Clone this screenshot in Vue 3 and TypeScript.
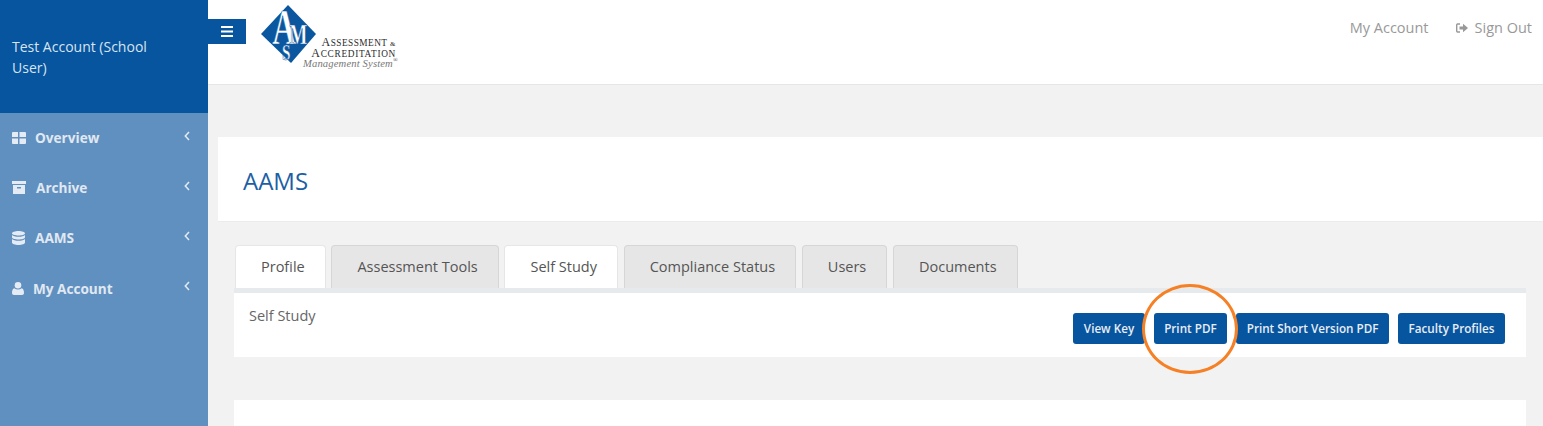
<script setup lang="ts">
const menu = [
  { label: 'Overview', icon: 'grid', gap: 'g1' },
  { label: 'Archive', icon: 'archive', gap: 'g2' },
  { label: 'AAMS', icon: 'db', gap: 'g3' },
  { label: 'My Account', icon: 'user', gap: 'g4' },
]
const tabs = [
  { label: 'Profile', on: true },
  { label: 'Assessment Tools', on: false },
  { label: 'Self Study', on: true },
  { label: 'Compliance Status', on: false },
  { label: 'Users', on: false },
  { label: 'Documents', on: false },
]
</script>

<template>
  <div class="page">
    <aside class="side">
      <div class="who">Test Account (School User)</div>
      <nav class="menu">
        <a v-for="m in menu" :key="m.label" class="item">
          <svg v-if="m.icon === 'grid'" class="ic" width="14" height="12" viewBox="0 0 14 12"><path fill="#e4ebf4" d="M0 1a1 1 0 0 1 1-1h5v5H0zM7.500 0H13a1 1 0 0 1 1 1v4H7.500zM0 6.500h6V12H1a1 1 0 0 1-1-1zM7.500 6.500H14V11a1 1 0 0 1-1 1H7.500z"/></svg>
          <svg v-else-if="m.icon === 'archive'" class="ic" width="14" height="13" viewBox="0 0 14 13"><path fill="#e4ebf4" fill-rule="evenodd" d="M0 0h14v3H0zM1 4h12v9H1zM5 6v1.500h4V6z"/></svg>
          <svg v-else-if="m.icon === 'db'" class="ic" width="13" height="14" viewBox="0 0 13 14"><path fill="#e4ebf4" d="M6.500 0C10 0 13 1 13 2.300S10 4.600 6.500 4.600 0 3.600 0 2.300 3 0 6.500 0zM0 4c1 1.200 3.500 1.800 6.500 1.800S12 5.200 13 4v2.300c0 1.300-3 2.300-6.500 2.300S0 7.600 0 6.300zM0 8c1 1.200 3.500 1.800 6.500 1.800S12 9.200 13 8v3.500c0 1.400-3 2.500-6.500 2.500S0 12.900 0 11.500z"/></svg>
          <svg v-else class="ic" width="12" height="13" viewBox="0 0 12 13"><circle cx="6" cy="3.300" r="3.300" fill="#e4ebf4"/><path fill="#e4ebf4" d="M2.300 6.200C3.300 7 4.600 7.400 6 7.400s2.700-.4 3.700-1.200C11.200 6.600 12 8.300 12 11c0 1.300-.8 2-2 2H2c-1.200 0-2-.7-2-2 0-2.700.8-4.400 2.300-4.800z"/></svg>
          <span class="lbl" :class="m.gap">{{ m.label }}</span>
          <svg class="chev" width="6" height="10" viewBox="0 0 6 10"><path d="M5 1 1.300 5 5 9" fill="none" stroke="#e4ebf4" stroke-width="1.500"/></svg>
        </a>
      </nav>
    </aside>

    <div class="main">
      <header class="top">
        <button class="toggle" aria-label="menu">
          <svg width="12" height="11" viewBox="0 0 12 11"><path fill="#fff" d="M0 0h12v2H0zM0 4.500h12v2H0zM0 9h12v2H0z"/></svg>
        </button>
        <div class="logo">
          <svg class="mark" width="57" height="60" viewBox="0 0 57 60">
            <path fill="#0a569f" d="M27 1 55 30 30 59 0 30z"/>
            <text class="mono" fill="#fff" stroke="#0a569f" stroke-width=".5" transform="scale(.66 1)"><tspan x="17" y="40" font-size="50">A</tspan><tspan x="43" y="40" font-size="29">M</tspan><tspan x="32" y="56" font-size="23">S</tspan></text>
          </svg>
          <div class="brand">
            <div class="b1"><span class="cap">A</span>SSESSMENT <span class="amp">&amp;</span></div>
            <div class="b2"><span class="cap">A</span>CCREDITATION</div>
            <div class="b3">Management System<sup>®</sup></div>
          </div>
        </div>
        <div class="links">
          <a class="lnk">My Account</a>
          <a class="lnk out">
            <svg width="12" height="10" viewBox="0 0 12 10"><path fill="none" stroke="#999" stroke-width="1.400" d="M4 1H1.500a1 1 0 0 0-.8.8v6.400a1 1 0 0 0 .8.8H4"/><path fill="#999" d="M3.500 3.500H7V.8L12 5 7 9.200V6.500H3.500z"/></svg>
            Sign Out
          </a>
        </div>
      </header>

      <section class="title"><h1>AAMS</h1></section>

      <div class="body">
        <div class="tabs">
          <a v-for="t in tabs" :key="t.label" class="tab" :class="{ on: t.on }">{{ t.label }}</a>
        </div>
        <div class="panel">
          <span class="ptext">Self Study</span>
          <div class="btns">
            <a class="btn">View Key</a>
            <span class="mark-wrap">
              <a class="btn">Print PDF</a>
              <span class="ring"></span>
            </span>
            <a class="btn">Print Short Version PDF</a>
            <a class="btn">Faculty Profiles</a>
          </div>
        </div>
        <div class="next"></div>
      </div>
    </div>
  </div>
</template>

<style>
html, body { margin: 0; height: 100%; overflow: hidden; background: #f2f2f2; }
</style>

<style scoped>
.page {
  display: flex;
  height: 426px;
  overflow: hidden;
  font-family: "Open Sans", sans-serif;
  background: #f2f2f2;
}
.side {
  width: 208px;
  flex: none;
  background: #6090c0;
}
.who {
  box-sizing: border-box;
  height: 113px;
  padding: 36px 40px 0 12px;
  background: #07549f;
  color: #d8e4f0;
  font-size: 14px;
  line-height: 21px;
}
.menu { display: flex; flex-direction: column; }
.item {
  display: flex;
  align-items: center;
  box-sizing: border-box;
  height: 50.200px;
  padding: 0 18px 1px 12px;
  color: #e0e8f2;
  font-size: 13.600px;
  font-weight: 700;
}
.ic { flex: none; }
.lbl { flex: 1; }
.g1 { margin-left: 9px; }
.g2 { margin-left: 10px; }
.g3 { margin-left: 10px; }
.g4 { margin-left: 9px; }
.chev { margin-top: -4px; }
.main { flex: 1; min-width: 0; display: flex; flex-direction: column; }
.top {
  box-sizing: border-box;
  height: 85px;
  flex: none;
  display: flex;
  align-items: flex-start;
  background: #fff;
  border-bottom: 1px solid #e6e6e6;
}
.toggle {
  width: 38px;
  height: 25px;
  margin-top: 19px;
  padding: 0;
  border: 0;
  background: #07549f;
  display: flex;
  align-items: center;
  justify-content: center;
}
.logo { display: flex; margin: 4px 0 0 15px; }
.mark { flex: none; overflow: visible; }
.mono { font-family: "Liberation Serif", serif; font-weight: 700; }
.brand {
  margin: 34px 0 0 -15px;
  width: 93px;
  font-family: "Liberation Serif", serif;
  color: #2b2b2b;
  text-align: right;
}
.b1, .b2 { font-size: 9.300px; line-height: 10.500px; letter-spacing: .7px; white-space: nowrap; }
.b1 { letter-spacing: .45px; }
.cap { font-size: 12px; line-height: 0; }
.amp { font-size: 7px; line-height: 0; }
.b3 { margin-right: -1px; font-size: 10.600px; line-height: 10.500px; font-style: italic; color: #777; white-space: nowrap; letter-spacing: .15px; }
.b3 sup { font-size: 6px; line-height: 0; color: #333; }
.links {
  margin-left: auto;
  display: flex;
  gap: 27px;
  padding: 18px 11px 0 0;
  color: #999;
  font-size: 14.500px;
  line-height: 20px;
}
.lnk { display: flex; align-items: center; gap: 7px; }
.title {
  box-sizing: border-box;
  height: 85px;
  flex: none;
  margin: 52px 0 0 10px;
  padding: 26px 25px 0;
  background: #fff;
  border-bottom: 1px solid #ececec;
}
h1 {
  margin: 0;
  font-size: 24px;
  line-height: 36px;
  font-weight: 400;
  color: #1d5fa5;
}
.body { padding: 23px 17px 0 26px; }
.tabs {
  display: flex;
  gap: 5.700px;
  height: 43px;
  padding-left: 1px;
  border-bottom: 5px solid #e7eaec;
}
.tab {
  box-sizing: border-box;
  height: 43px;
  padding: 0 20px 2px 25px;
  display: flex;
  align-items: center;
  background: #e6e6e6;
  border: 1px solid #d6d6d6;
  border-bottom: 0;
  border-radius: 4px 4px 0 0;
  font-size: 14.500px;
  color: #555;
}
.tab.on { background: #fff; border-color: #e6e6e6; }
.panel {
  display: flex;
  justify-content: space-between;
  height: 64px;
  padding: 0 21px 0 15px;
  background: #fff;
}
.ptext { margin-top: 12px; font-size: 14.500px; line-height: 21px; color: #666; }
.btns { display: flex; align-items: flex-start; gap: 9px; margin-top: 20px; }
.btn {
  display: block;
  box-sizing: border-box;
  height: 31px;
  padding: 0 10.500px;
  line-height: 31px;
  background: #07549f;
  border-radius: 3px;
  color: #e8eef6;
  font-size: 11.700px;
  font-weight: 600;
  white-space: nowrap;
}
.mark-wrap { position: relative; display: block; }
.ring {
  position: absolute;
  left: 50%;
  top: 50%;
  box-sizing: border-box;
  width: 96px;
  height: 90px;
  transform: translate(-50%, -50%);
  border: 3.500px solid #f58025;
  border-radius: 50%;
  pointer-events: none;
}
.next { height: 60px; margin-top: 43px; background: #fff; }
</style>
